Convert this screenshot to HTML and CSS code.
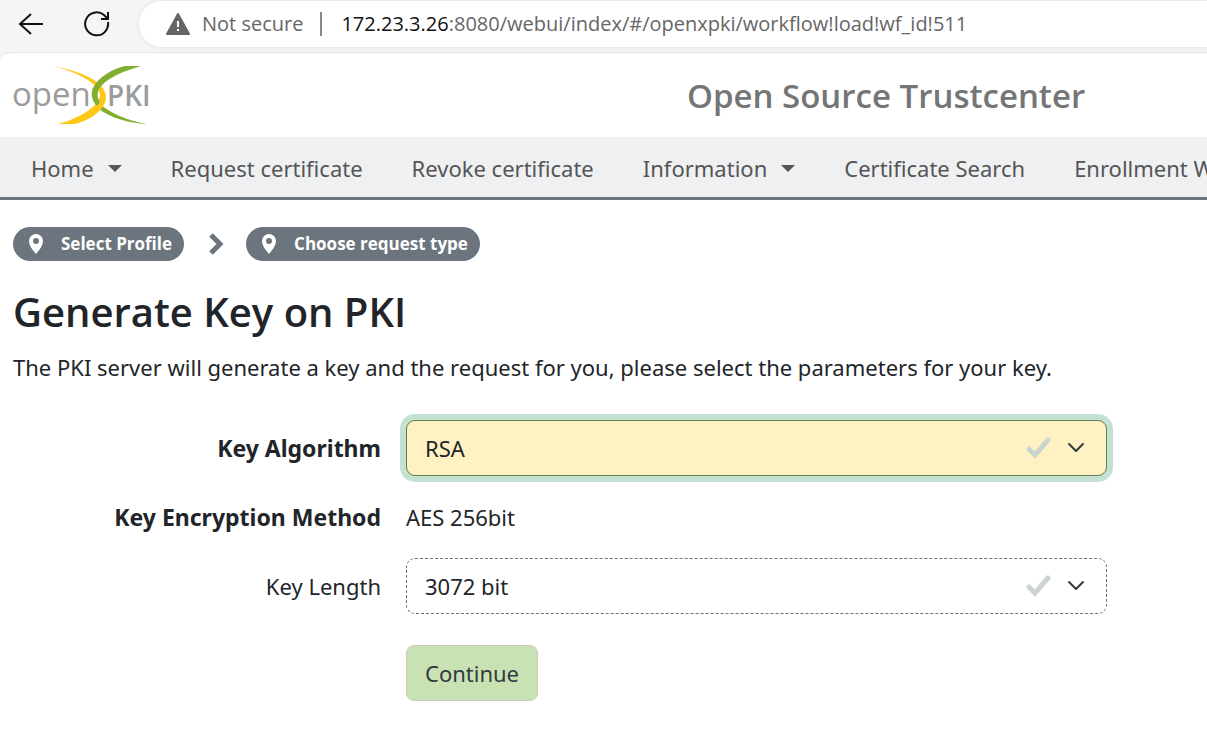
FILE: index.html
```
<!DOCTYPE html>
<html lang="en">
  <head>
    <meta charset="UTF-8" />
    <meta name="viewport" content="width=device-width, initial-scale=1.0" />
    <title>Open Source Trustcenter</title>
    <link rel="stylesheet" href="styles.css">
  </head>
  <body>
    <div class="browser">
      <button class="tool" aria-label="Back">
        <svg width="26" height="24" viewBox="0 0 26 24"><path d="M13 2 L2 12 L13 22 M2 12 H25" /></svg>
      </button>
      <button class="tool" aria-label="Reload">
        <svg width="26" height="26" viewBox="0 0 26 26"><path d="M24 11 A11.500 11.500 0 1 1 20 4 L24 8 M24 1 V8 H17" /></svg>
      </button>
      <div class="address">
        <svg class="warning" width="24" height="24" viewBox="0 0 24 24">
          <path d="M12 2 L23 22 H1 Z" fill="#666" stroke="#666" stroke-width="2" stroke-linejoin="round" />
          <path d="M12 9 V15 M12 17 V19" stroke="#fff" stroke-width="2" />
        </svg>
        <span class="security">Not secure</span>
        <span class="url"><b>172.23.3.26</b>:8080/webui/index/#/openxpki/workflow!load!wf_id!511</span>
      </div>
    </div>

    <div class="page">
      <header>
        <a class="logo" href="#" aria-label="OpenXPKI">
          <svg width="144" height="64" viewBox="0 0 144 64">
            <text class="logo-open" x="1" y="43">open</text>
            <text class="logo-pki" x="96" y="43">PKI</text>
            <path d="M90 42 C101 51 118 58 136 61 C117 60 100 55 88 46 Z" fill="#83af31" />
            <path d="M42 3 C68 8 90 17 94 29 C99 42 84 56 64 61 H47 C70 55 89 42 89 32 C88 20 66 9 42 3 Z" fill="#fdc817" />
            <path d="M114 3 H130 C109 9 90 18 87 29 C86 33 87 36 89 39 L86 43 C82 39 80 34 81 28 C84 17 98 7 114 3 Z" fill="#83af31" />
          </svg>
        </a>
        <div class="title">Open Source Trustcenter</div>
      </header>

      <nav>
        <a class="dropdown" href="#">Home</a>
        <a href="#">Request certificate</a>
        <a href="#">Revoke certificate</a>
        <a class="dropdown" href="#">Information</a>
        <a href="#">Certificate Search</a>
        <a href="#">Enrollment Workflows</a>
      </nav>

      <main>
        <div class="steps">
          <span class="badge">
            <svg width="16" height="20" viewBox="0 0 16 20"><path fill-rule="evenodd" d="M8 0 A7 7 0 0 1 15 7 C15 12 11 16 8 20 C5 16 1 12 1 7 A7 7 0 0 1 8 0 Z M8 4 A3 3 0 1 0 8 10 A3 3 0 1 0 8 4 Z" /></svg>
            Select Profile
          </span>
          <svg class="arrow" width="16" height="22" viewBox="0 0 16 22"><path d="M3 2 L12 11 L3 20" /></svg>
          <span class="badge">
            <svg width="16" height="20" viewBox="0 0 16 20"><path fill-rule="evenodd" d="M8 0 A7 7 0 0 1 15 7 C15 12 11 16 8 20 C5 16 1 12 1 7 A7 7 0 0 1 8 0 Z M8 4 A3 3 0 1 0 8 10 A3 3 0 1 0 8 4 Z" /></svg>
            Choose request type
          </span>
        </div>

        <h1>Generate Key on PKI</h1>
        <p>The PKI server will generate a key and the request for you, please select the parameters for your key.</p>

        <form>
          <label class="required" for="algorithm">Key Algorithm</label>
          <div class="field">
            <select id="algorithm" class="active">
              <option>RSA</option>
            </select>
            <svg class="marks" width="64" height="24" viewBox="0 0 64 24">
              <path class="check" d="M6 13 L12 19 L25 4" />
              <path class="caret" d="M46 8 L53 15 L60 8" />
            </svg>
          </div>

          <label class="required" for="encryption">Key Encryption Method</label>
          <output id="encryption">AES 256bit</output>

          <label for="length">Key Length</label>
          <div class="field">
            <select id="length">
              <option>3072 bit</option>
            </select>
            <svg class="marks" width="64" height="24" viewBox="0 0 64 24">
              <path class="check" d="M6 13 L12 19 L25 4" />
              <path class="caret" d="M46 8 L53 15 L60 8" />
            </svg>
          </div>

          <button class="continue" type="button">Continue</button>
        </form>
      </main>
    </div>
  </body>
</html>
```
FILE: styles.css
```
* {
  box-sizing: border-box;
}

body {
  margin: 0;
  background-color: #f5f5f5;
  color: #212529;
  font-family: "Noto Sans", "Open Sans", sans-serif;
  font-size: 22px;
  line-height: 32px;
  overflow-x: hidden;
}

/* browser bar */

.browser {
  display: flex;
  align-items: center;
  height: 52px;
  padding-left: 18px;
  padding-bottom: 4px;
}

.tool {
  display: flex;
  width: 26px;
  margin-right: 40px;
  padding: 0;
  border: 0;
  background: none;
}

.tool svg {
  fill: none;
  stroke: #111;
  stroke-width: 2;
}

.tool + .tool {
  margin-right: 29px;
}

.address {
  display: flex;
  flex: 1;
  align-items: center;
  height: 46px;
  padding-left: 27px;
  border-radius: 23px 0 0 23px;
  background-color: #fff;
  box-shadow: 0 0 4px #ddd;
  color: #666;
  font-family: "Open Sans", sans-serif;
  font-size: 20px;
  white-space: nowrap;
}

.security {
  margin-left: 12px;
  padding-right: 17px;
  border-right: 2px solid #888;
  line-height: 24px;
}

.url {
  margin-left: 19px;
}

.url b {
  color: #111;
  font-weight: normal;
}

/* page */

.page {
  min-height: calc(100vh - 52px);
  border-top: 1px solid #e5e5e5;
  border-radius: 10px 0 0 0;
  background-color: #fff;
}

header {
  display: flex;
  align-items: center;
  height: 84px;
  padding-left: 11px;
}

.logo {
  display: flex;
}

.logo text {
  fill: #9b9b9b;
  font-family: "Open Sans", sans-serif;
}

.logo-open {
  font-size: 33px;
}

.logo-pki {
  font-size: 28px;
  font-weight: 600;
}

.title {
  margin-left: 532px;
  padding-top: 2px;
  color: #757575;
  font-family: "Open Sans", sans-serif;
  font-size: 33px;
  font-weight: 600;
  line-height: 48px;
  white-space: nowrap;
}

nav {
  display: flex;
  gap: 49px;
  padding: 15px 31px 13px;
  border-bottom: 3px solid #6c757d;
  background-color: #eff0f2;
  overflow: hidden;
}

nav a {
  color: #555;
  text-decoration: none;
  white-space: nowrap;
}

.dropdown::after {
  content: "";
  display: inline-block;
  margin-left: 14px;
  border: 7px solid transparent;
  border-top-color: #555;
  border-bottom: 0;
  vertical-align: 5px;
}

main {
  padding: 27px 13px;
}

.steps {
  display: flex;
  align-items: center;
}

.badge {
  display: flex;
  align-items: center;
  gap: 17px;
  height: 34px;
  padding: 0 12px 0 15px;
  border-radius: 17px;
  background-color: #6c757d;
  color: #fff;
  font-family: "Open Sans", sans-serif;
  font-size: 17px;
  font-weight: bold;
}

.badge svg {
  fill: #fff;
}

.arrow {
  margin: 0 22px 0 24px;
  fill: none;
  stroke: #6c757d;
  stroke-width: 5;
}

h1 {
  margin: 23px 0 0;
  font-family: "Open Sans", sans-serif;
  font-size: 40px;
  font-weight: 600;
  line-height: 56px;
}

p {
  margin: 11px 0 37px;
}

/* form */

form {
  display: grid;
  grid-template-columns: 368px minmax(0, 701px);
  align-items: center;
  column-gap: 25px;
}

label {
  text-align: right;
}

.required {
  font-size: 23px;
  font-weight: bold;
}

.field {
  position: relative;
}

select {
  display: block;
  appearance: none;
  width: 100%;
  height: 56px;
  padding: 0 18px;
  border: 1px dashed #5f7a6c;
  border-radius: 9px;
  background-color: #fff;
  color: #212529;
  font: inherit;
}

select.active {
  border: 1px solid #5f7f52;
  background-color: #fff2c2;
  box-shadow: 0 0 0 6px #c4e1d2;
}

.marks {
  position: absolute;
  top: 16px;
  right: 20px;
  fill: none;
  pointer-events: none;
}

.check {
  stroke: #cad6cd;
  stroke-width: 5;
  stroke-linecap: round;
}

.caret {
  stroke: #343a40;
  stroke-width: 2;
  stroke-linecap: round;
  stroke-linejoin: round;
}

output {
  padding: 25px 0;
}

.continue {
  grid-column: 2;
  justify-self: start;
  height: 56px;
  margin-top: 31px;
  padding: 0 18px;
  border: 1px solid #c3cfbc;
  border-radius: 8px;
  background-color: #c9e2b3;
  color: #343a40;
  font: inherit;
}
```
